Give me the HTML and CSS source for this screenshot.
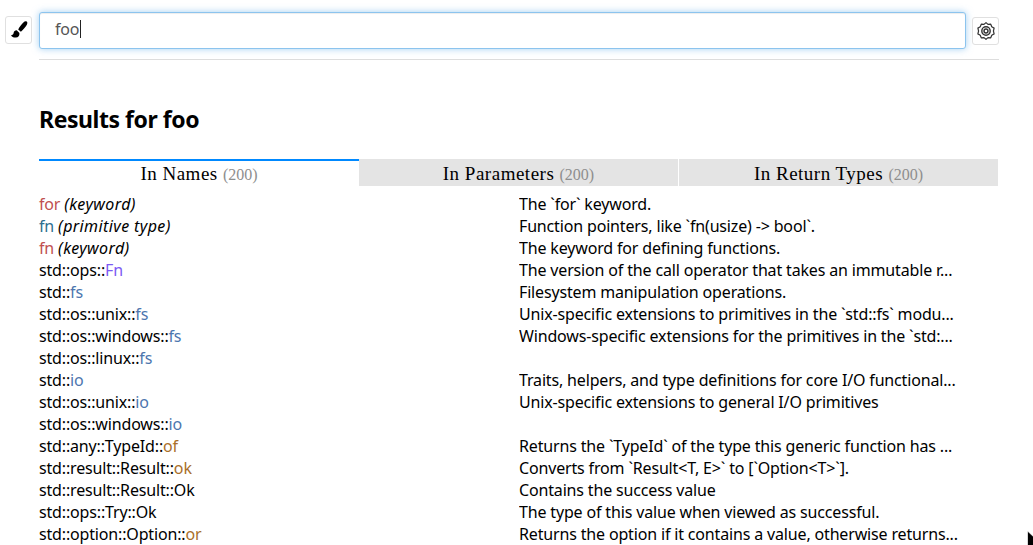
FILE: index.html
```html
<!DOCTYPE html>
<html lang="en">
<head>
<meta charset="utf-8">
<title>Results for foo</title>
<link rel="stylesheet" href="styles.css">
</head>
<body>
<div class="page">
  <div class="top">
    <button class="tool tool-brush" aria-label="theme">
      <svg width="20" height="20" viewBox="0 0 20 20"><path d="M17.6 1.600c-1-.6-2.200 0-3.200 1-1.900 1.900-3.900 4.600-5.200 6.800l2.700 2.400c2-1.700 4.500-4.400 5.800-6.700.7-1.300 1-2.900-.1-3.500zM7.700 10.200c-1.700.1-2.800 1.100-3.100 2.700-.2 1.300-1 2.200-2.600 2.300.8 1.600 2.800 2.500 4.900 2.300 2.400-.2 3.800-1.700 3.500-4.600z" fill="#000"/></svg>
    </button>
    <div class="search"><span class="query">foo</span><span class="caret"></span></div>
    <button class="tool tool-gear" aria-label="settings">
      <svg width="22" height="22" viewBox="0 0 20 20" fill="none" stroke="#333"><path d="M10 1.500l2 1.800 2.800-.2 1 2.600 2.400 1.400-.7 2.900.7 2.900-2.400 1.400-1 2.600-2.800-.2-2 1.800-2-1.800-2.800.2-1-2.600-2.400-1.400.7-2.900-.7-2.900 2.400-1.400 1-2.600 2.800.2z" stroke-width="1.200" stroke-linejoin="round" transform="translate(1 1) scale(.9)"/><circle cx="10" cy="10" r="3.800" stroke-width="1.300"/><circle cx="10" cy="10" r="1.800" stroke-width="1.300"/></svg>
    </button>
  </div>
  <div class="rule"></div>
  <h1>Results for foo</h1>
  <div class="tabs">
    <div class="tab active">In Names <span class="count">(200)</span></div>
    <div class="tab">In Parameters <span class="count">(200)</span></div>
    <div class="tab">In Return Types <span class="count">(200)</span></div>
  </div>
  <div class="results">
    <div class="row"><div class="name"><span class="kw">for</span> <i>(keyword)</i></div><div class="desc">The `for` keyword.</div></div>
    <div class="row"><div class="name"><span class="prim">fn</span> <i>(primitive type)</i></div><div class="desc">Function pointers, like `fn(usize) -&gt; bool`.</div></div>
    <div class="row"><div class="name"><span class="kw">fn</span> <i>(keyword)</i></div><div class="desc">The keyword for defining functions.</div></div>
    <div class="row"><div class="name">std::ops::<span class="trait">Fn</span></div><div class="desc">The version of the call operator that takes an immutable r...</div></div>
    <div class="row"><div class="name">std::<span class="mod">fs</span></div><div class="desc">Filesystem manipulation operations.</div></div>
    <div class="row"><div class="name">std::os::unix::<span class="mod">fs</span></div><div class="desc">Unix-specific extensions to primitives in the `std::fs` modu...</div></div>
    <div class="row"><div class="name">std::os::windows::<span class="mod">fs</span></div><div class="desc">Windows-specific extensions for the primitives in the `std:...</div></div>
    <div class="row"><div class="name">std::os::linux::<span class="mod">fs</span></div><div class="desc"></div></div>
    <div class="row"><div class="name">std::<span class="mod">io</span></div><div class="desc">Traits, helpers, and type definitions for core I/O functional...</div></div>
    <div class="row"><div class="name">std::os::unix::<span class="mod">io</span></div><div class="desc">Unix-specific extensions to general I/O primitives</div></div>
    <div class="row"><div class="name">std::os::windows::<span class="mod">io</span></div><div class="desc"></div></div>
    <div class="row"><div class="name">std::any::TypeId::<span class="fun">of</span></div><div class="desc">Returns the `TypeId` of the type this generic function has ...</div></div>
    <div class="row"><div class="name">std::result::Result::<span class="fun">ok</span></div><div class="desc">Converts from `Result&lt;T, E&gt;` to [`Option&lt;T&gt;`].</div></div>
    <div class="row"><div class="name">std::result::Result::Ok</div><div class="desc">Contains the success value</div></div>
    <div class="row"><div class="name">std::ops::Try::Ok</div><div class="desc">The type of this value when viewed as successful.</div></div>
    <div class="row"><div class="name">std::option::Option::<span class="fun">or</span></div><div class="desc">Returns the option if it contains a value, otherwise returns...</div></div>
  </div>
</div>
<svg class="pointer" width="10" height="16" viewBox="0 0 10 16"><path d="M.5 0v16h9.500V9z" fill="#000" stroke="#fff" stroke-width=".7"/></svg>
</body>
</html>
```
FILE: styles.css
```css
html, body { margin: 0; padding: 0; height: 545px; overflow: hidden; background: #fff; }
body { font-family: "Noto Sans", "Open Sans", sans-serif; color: #000; position: relative; }
.page { width: 960px; margin-left: 39px; padding-top: 12px; }
.top { position: relative; height: 37px; width: 927px; }
.search {
  box-sizing: border-box; width: 927px; height: 37px; padding: 0 0 3px 15px;
  display: flex; align-items: center; border: 1px solid #8cc4ee; border-radius: 3px;
  box-shadow: 0 0 7px rgba(102,175,233,.6), inset 0 1px 1px rgba(0,0,0,.075);
  font-size: 16px; color: #555; background: #fff;
}
.query { letter-spacing: -.2px; }
.caret { width: 1px; height: 18px; background: #222; margin-left: 1px; }
.tool {
  position: absolute; box-sizing: border-box; width: 27px; height: 28px; padding: 0;
  display: flex; align-items: center; justify-content: center;
  background: #fff; border: 1px solid #e0e0e0; border-radius: 3px;
}
.tool-brush { left: -34px; top: 4px; }
.tool-gear { left: 933px; top: 5px; }
.rule { height: 1px; background: #ddd; margin-top: 10px; }
h1 { margin: 44px 0 0; height: 55px; line-height: 30px; font-size: 23px; font-weight: 700; letter-spacing: -.45px; }
.tabs { display: grid; grid-template-columns: 320px 319px 320px; grid-template-rows: 27px; width: 959px; height: 27px; }
.tab {
  box-sizing: border-box; height: 27px; text-align: center; background: #e4e4e4;
  font-family: "Liberation Serif", serif; font-size: 19px; letter-spacing: .5px; line-height: 30px;
}
.tab:last-child { border-left: 1px solid #fff; }
.tab.active { background: #fff; border-top: 2px solid #0089ff; line-height: 26px; }
.count { color: #8e8e8e; font-size: 16px; letter-spacing: 0; }
.results { font-size: 16px; letter-spacing: -.16px; padding-top: 7px; }
.results i { letter-spacing: .4px; }
.row { display: flex; height: 22px; line-height: 22px; white-space: nowrap; }
.name { width: 480px; flex: none; }
.desc { flex: 1; overflow: hidden; }
.kw { color: #c0504f; }
.prim { color: #2d6f8f; }
.trait { color: #7c5af3; }
.mod { color: #4d76ae; }
.fun { color: #a96f2a; }
.pointer { position: absolute; left: 1027px; top: 531px; }
```
